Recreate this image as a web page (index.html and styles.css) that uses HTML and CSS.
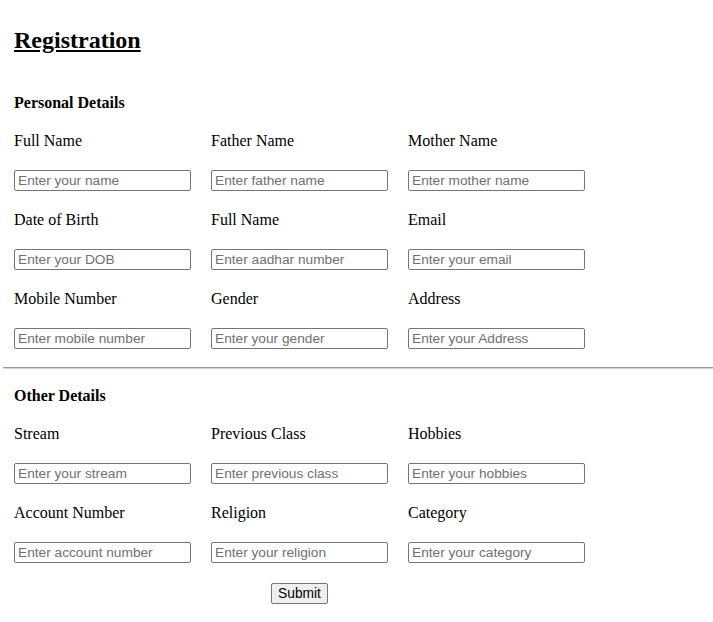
FILE: index.html
```html
<!DOCTYPE html>
<html lang="en">
<head>
<meta charset="utf-8">
<title>Registration</title>
<link rel="stylesheet" href="styles.css">
</head>
<body>
<div class="block">
  <h2 class="title">Registration</h2>
  <h4 class="section-title first">Personal Details</h4>
  <div class="fields">
    <div class="field"><label>Full Name</label><input type="text" placeholder="Enter your name"></div>
    <div class="field"><label>Father Name</label><input type="text" placeholder="Enter father name"></div>
    <div class="field"><label>Mother Name</label><input type="text" placeholder="Enter mother name"></div>
    <div class="field"><label>Date of Birth</label><input type="text" placeholder="Enter your DOB"></div>
    <div class="field"><label>Full Name</label><input type="text" placeholder="Enter aadhar number"></div>
    <div class="field"><label>Email</label><input type="text" placeholder="Enter your email"></div>
    <div class="field"><label>Mobile Number</label><input type="text" placeholder="Enter mobile number"></div>
    <div class="field"><label>Gender</label><input type="text" placeholder="Enter your gender"></div>
    <div class="field"><label>Address</label><input type="text" placeholder="Enter your Address"></div>
  </div>
</div>
<hr class="divider">
<div class="block">
  <h4 class="section-title">Other Details</h4>
  <div class="fields">
    <div class="field"><label>Stream</label><input type="text" placeholder="Enter your stream"></div>
    <div class="field"><label>Previous Class</label><input type="text" placeholder="Enter previous class"></div>
    <div class="field"><label>Hobbies</label><input type="text" placeholder="Enter your hobbies"></div>
    <div class="field"><label>Account Number</label><input type="text" placeholder="Enter account number"></div>
    <div class="field"><label>Religion</label><input type="text" placeholder="Enter your religion"></div>
    <div class="field"><label>Category</label><input type="text" placeholder="Enter your category"></div>
  </div>
  <div class="actions"><button type="button" class="submit">Submit</button></div>
</div>
</body>
</html>
```
FILE: styles.css
```css
html, body {
  margin: 0;
  padding: 0;
  background: #ffffff;
  color: #000000;
  font-family: "Liberation Serif", "Times New Roman", serif;
  font-size: 16px;
}

.block {
  padding-left: 14px;
}

.title {
  margin: 0;
  padding-top: 26px;
  font-size: 24px;
  line-height: 28px;
  font-weight: bold;
  text-decoration: underline;
}

.section-title {
  margin: 18px 0 0 0;
  font-size: 16px;
  line-height: 18px;
  font-weight: bold;
}

.section-title.first {
  margin-top: 40px;
}

.fields {
  display: grid;
  grid-template-columns: repeat(3, 177px);
  column-gap: 20px;
  row-gap: 20px;
  margin-top: 20px;
  width: 571px;
}

.field {
  display: flex;
  flex-direction: column;
  gap: 20px;
}

.field label {
  display: block;
  font-size: 16px;
  line-height: 18px;
  height: 18px;
  white-space: nowrap;
}

.field input {
  box-sizing: border-box;
  width: 177px;
  height: 21px;
  margin: 0;
  padding: 1px 2px 1px 3px;
  border: 1px solid #767676;
  border-radius: 2px;
  font-family: "Liberation Sans", Arial, sans-serif;
  font-size: 13.7px;
  color: #000;
  background: #fff;
}

.field input::placeholder {
  color: #707070;
  opacity: 1;
}

.divider {
  margin: 18px 0 0 3px;
  height: 0;
  border: 0;
  border-top: 1px solid #9a9a9a;
  border-bottom: 1px solid #d4d4d4;
}

.actions {
  width: 571px;
  margin-top: 20px;
  display: flex;
  justify-content: center;
}

.submit {
  box-sizing: border-box;
  height: 21px;
  margin: 0;
  padding: 1px 6px;
  border: 1px solid #767676;
  border-radius: 2px;
  background: #efefef;
  color: #000;
  font-family: "Liberation Sans", Arial, sans-serif;
  font-size: 13.8px;
  line-height: normal;
}
```
